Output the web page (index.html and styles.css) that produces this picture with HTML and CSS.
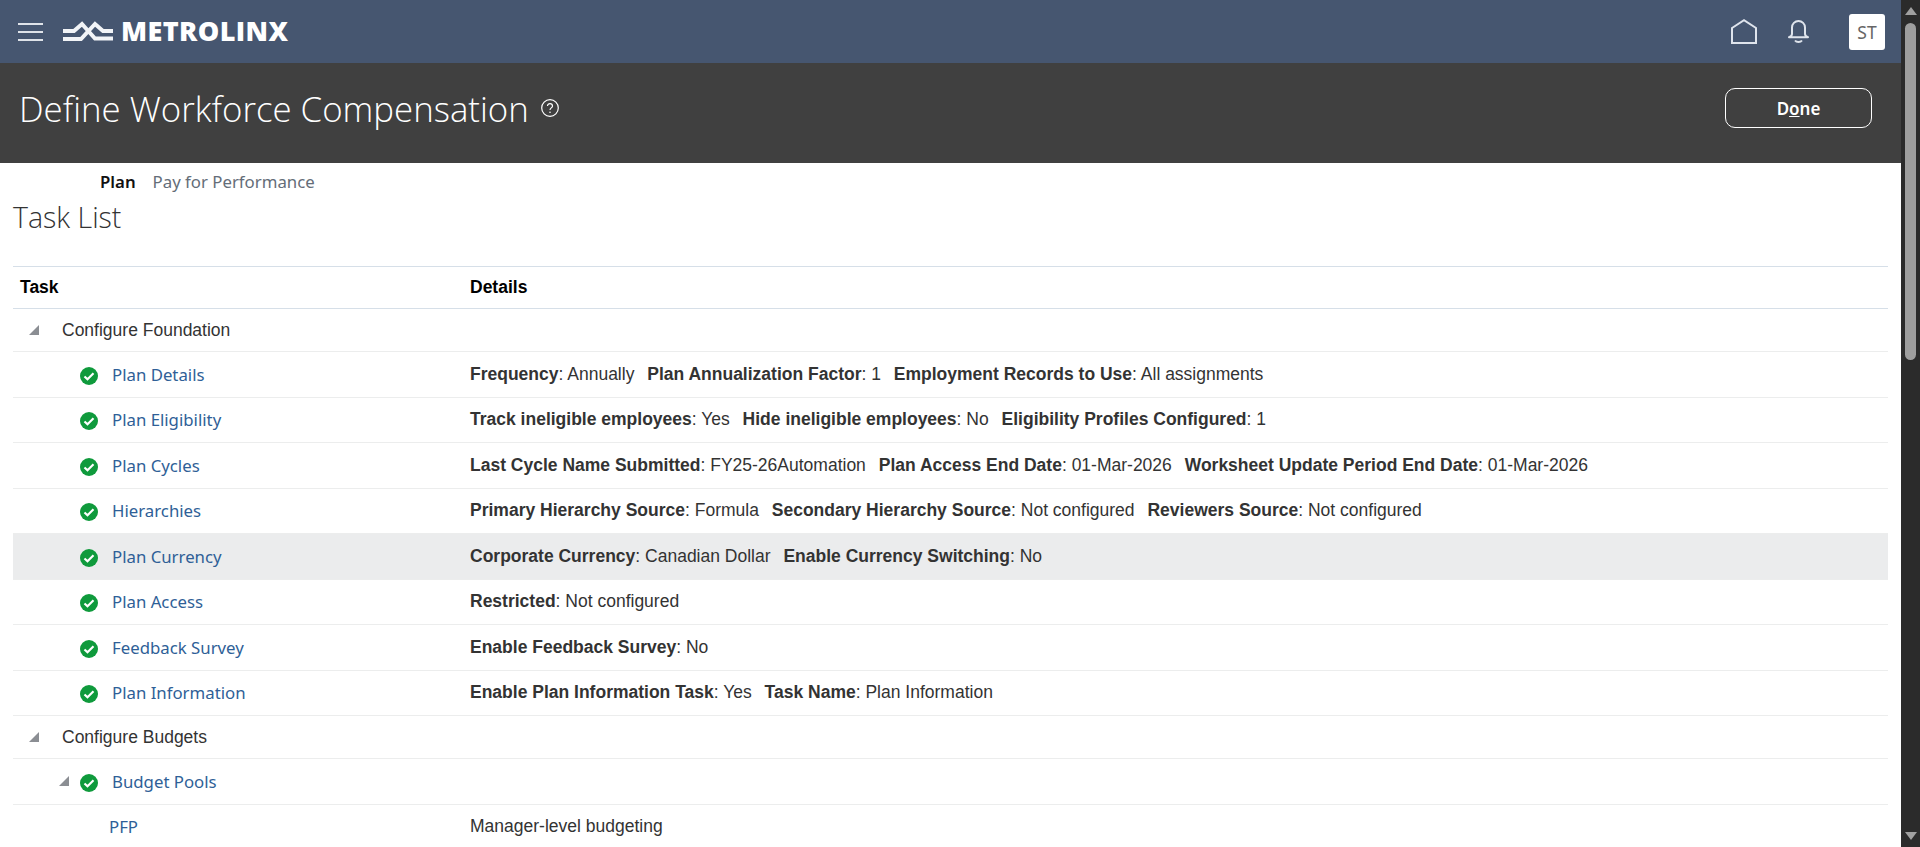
FILE: index.html
```html
<!DOCTYPE html>
<html lang="en">
<head>
<meta charset="UTF-8" />
<title>Define Workforce Compensation</title>
<link rel="stylesheet" href="styles.css">
</head>
<body>

<div class="page">
  <div class="topbar">
    <button class="menu-btn" aria-label="Menu"><span></span><span></span><span></span></button>
    <div class="logo">
      <svg class="logo-mark" width="50" height="22" viewBox="0 0 50 22">
        <path d="M0 10H11L19 3L32 17.500H50" fill="none" stroke="#f2f4f7" stroke-width="4"/>
        <path d="M0 18H18L32 3L40 10H50" fill="none" stroke="#f2f4f7" stroke-width="4"/>
      </svg>
      <span class="logo-text">METROLINX</span>
    </div>
    <div class="topbar-right">
      <svg class="home-icon" width="26" height="25" viewBox="0 0 26 25">
        <path d="M1 9L13 1.200L25 9V24H1z" fill="none" stroke="#dfe4ec" stroke-width="2"/>
      </svg>
      <svg class="bell-icon" width="21" height="25" viewBox="0 0 21 25">
        <path d="M4 15V8.500a6.500 6.500 0 0 1 13 0V15c0 1.500 1 2.500 3 3.200H1c2-.7 3-1.700 3-3.200z" fill="none" stroke="#dfe4ec" stroke-width="2" stroke-linejoin="round"/>
        <path d="M7 21.500c1.500 2 5.500 2 7 0" fill="none" stroke="#dfe4ec" stroke-width="2"/>
      </svg>
      <div class="avatar">ST</div>
    </div>
  </div>

  <div class="titlebar">
    <h1>Define Workforce Compensation</h1>
    <svg class="help-icon" width="20" height="20" viewBox="0 0 20 20">
      <circle cx="10" cy="10" r="8.300" fill="none" stroke="#fff" stroke-width="1.200"/>
      <path d="M7.500 8c0-3.200 5-3.200 5 0 0 1.800-2.500 2-2.500 4" fill="none" stroke="#fff" stroke-width="1.200"/>
      <circle cx="10" cy="14.300" r=".8" fill="#fff"/>
    </svg>
    <button class="done-btn">D<u>o</u>ne</button>
  </div>

  <div class="content">
    <div class="tabs">
      <span class="tab tab-active">Plan</span>
      <span class="tab">Pay for Performance</span>
    </div>
    <h2>Task List</h2>

    <table class="tasks">
      <colgroup><col class="col-task"><col></colgroup>
      <thead>
        <tr><th>Task</th><th>Details</th></tr>
      </thead>
      <tbody>
        <tr class="group">
          <td><div class="cell lvl-1"><i class="tri"></i>Configure Foundation</div></td>
          <td></td>
        </tr>
        <tr>
          <td><div class="cell lvl-2"><svg class="ok"><use href="#ok"/></svg><a href="#">Plan Details</a></div></td>
          <td><b>Frequency</b>: Annually <b>Plan Annualization Factor</b>: 1 <b>Employment Records to Use</b>: All assignments</td>
        </tr>
        <tr>
          <td><div class="cell lvl-2"><svg class="ok"><use href="#ok"/></svg><a href="#">Plan Eligibility</a></div></td>
          <td><b>Track ineligible employees</b>: Yes <b>Hide ineligible employees</b>: No <b>Eligibility Profiles Configured</b>: 1</td>
        </tr>
        <tr>
          <td><div class="cell lvl-2"><svg class="ok"><use href="#ok"/></svg><a href="#">Plan Cycles</a></div></td>
          <td><b>Last Cycle Name Submitted</b>: FY25-26Automation <b>Plan Access End Date</b>: 01-Mar-2026 <b>Worksheet Update Period End Date</b>: 01-Mar-2026</td>
        </tr>
        <tr>
          <td><div class="cell lvl-2"><svg class="ok"><use href="#ok"/></svg><a href="#">Hierarchies</a></div></td>
          <td><b>Primary Hierarchy Source</b>: Formula <b>Secondary Hierarchy Source</b>: Not configured <b>Reviewers Source</b>: Not configured</td>
        </tr>
        <tr class="selected">
          <td><div class="cell lvl-2"><svg class="ok"><use href="#ok"/></svg><a href="#">Plan Currency</a></div></td>
          <td><b>Corporate Currency</b>: Canadian Dollar <b>Enable Currency Switching</b>: No</td>
        </tr>
        <tr>
          <td><div class="cell lvl-2"><svg class="ok"><use href="#ok"/></svg><a href="#">Plan Access</a></div></td>
          <td><b>Restricted</b>: Not configured</td>
        </tr>
        <tr>
          <td><div class="cell lvl-2"><svg class="ok"><use href="#ok"/></svg><a href="#">Feedback Survey</a></div></td>
          <td><b>Enable Feedback Survey</b>: No</td>
        </tr>
        <tr>
          <td><div class="cell lvl-2"><svg class="ok"><use href="#ok"/></svg><a href="#">Plan Information</a></div></td>
          <td><b>Enable Plan Information Task</b>: Yes <b>Task Name</b>: Plan Information</td>
        </tr>
        <tr class="group">
          <td><div class="cell lvl-1"><i class="tri"></i>Configure Budgets</div></td>
          <td></td>
        </tr>
        <tr>
          <td><div class="cell lvl-2 has-tri"><i class="tri"></i><svg class="ok"><use href="#ok"/></svg><a href="#">Budget Pools</a></div></td>
          <td></td>
        </tr>
        <tr>
          <td><div class="cell lvl-3"><a href="#">PFP</a></div></td>
          <td>Manager-level budgeting</td>
        </tr>
      </tbody>
    </table>
  </div>

  <div class="scrollbar">
    <div class="sb-up"></div>
    <div class="sb-track"><div class="sb-thumb"></div></div>
    <div class="sb-down"></div>
  </div>
</div>

<svg width="0" height="0" class="defs">
  <symbol id="ok" viewBox="0 0 18 18">
    <circle cx="9" cy="9" r="9" fill="#0f9a3c"/>
    <path d="M4.500 9.500l3 2.800 6-6" fill="none" stroke="#fff" stroke-width="2.200"/>
  </symbol>
</svg>

</body>
</html>
```

FILE: styles.css
```css
html, body {
  margin: 0;
  height: 100%;
  overflow: hidden;
}
body {
  font-family: "Liberation Sans", Arial, sans-serif;
  font-size: 17.5px;
  color: #333;
  background: #fff;
}
.defs {
  position: absolute;
}
.page {
  position: relative;
  height: 847px;
  padding-right: 19px;
  overflow: hidden;
}

/* top bar */
.topbar {
  display: flex;
  align-items: center;
  height: 63px;
  padding: 0 16px 0 18px;
  background: #465670;
}
.menu-btn {
  display: flex;
  flex-direction: column;
  justify-content: space-between;
  width: 25px;
  height: 18px;
  margin: 0;
  padding: 0;
  background: none;
  border: none;
}
.menu-btn span {
  display: block;
  height: 2px;
  background: #dfe3e9;
}
.logo {
  display: flex;
  align-items: center;
  margin-left: 20px;
}
.logo-text {
  margin-left: 8px;
  margin-bottom: 2px;
  font-family: "Open Sans", sans-serif;
  font-size: 27px;
  font-weight: 800;
  letter-spacing: 0.4px;
  color: #fff;
}
.topbar-right {
  display: flex;
  align-items: center;
  margin-left: auto;
}
.home-icon {
  margin-right: 31px;
}
.bell-icon {
  margin-right: 40px;
}
.avatar {
  width: 36px;
  height: 36px;
  line-height: 36px;
  text-align: center;
  font-family: "Noto Sans", sans-serif;
  font-size: 17.5px;
  color: #666;
  background: #fff;
  border-radius: 3px;
}

/* title bar */
.titlebar {
  display: flex;
  align-items: center;
  height: 90px;
  padding: 0 29px 10px 19px;
  background: #404040;
}
.titlebar h1 {
  margin: 0;
  font-family: "Open Sans", sans-serif;
  font-size: 34.8px;
  font-weight: 300;
  color: #fff;
}
.help-icon {
  margin-left: 11px;
}
.done-btn {
  width: 147px;
  height: 40px;
  margin-left: auto;
  font-family: "Noto Sans", sans-serif;
  font-size: 17px;
  font-weight: 600;
  color: #fff;
  background: none;
  border: 1px solid #fff;
  border-radius: 10px;
}

/* content */
.content {
  padding: 0 13px;
}
.tabs {
  display: flex;
  gap: 17px;
  height: 38px;
  padding: 7px 0 0 87px;
  box-sizing: border-box;
  font-family: "Noto Sans", sans-serif;
  font-size: 16.8px;
  color: #646d78;
}
.tab-active {
  font-weight: 600;
  color: #111;
}
.content h2 {
  height: 65px;
  margin: 0;
  font-family: "Open Sans", sans-serif;
  font-size: 28.5px;
  line-height: 33px;
  font-weight: 300;
  color: #333;
}
.tasks {
  width: 100%;
  border-collapse: collapse;
  table-layout: fixed;
}
.col-task {
  width: 450px;
}
.tasks th {
  height: 41px;
  padding: 0 0 0 7px;
  text-align: left;
  color: #000;
  border-top: 1px solid #d6dfe8;
  border-bottom: 1px solid #d6dfe8;
}
.tasks td {
  height: 44.5px;
  padding: 0 0 0 7px;
  border-bottom: 1px solid #eceded;
  color: #333;
}
.tasks .group td {
  height: 42px;
}
.tasks b {
  margin-left: 8px;
}
.tasks td > b:first-child {
  margin-left: 0;
}
.selected td {
  background: #ebeced;
}
.cell {
  display: flex;
  align-items: center;
}
.lvl-1 {
  padding-left: 42px;
  position: relative;
}
.lvl-1 .tri {
  position: absolute;
  left: 9px;
}
.lvl-2 {
  padding-left: 60px;
  position: relative;
}
.lvl-2 .tri {
  position: absolute;
  left: 39px;
}
.lvl-3 {
  padding-left: 89px;
}
.tri {
  width: 0;
  height: 0;
  border-style: solid;
  border-width: 0 0 10px 10px;
  border-color: transparent transparent #8b8e93 transparent;
}
.ok {
  flex: none;
  width: 18px;
  height: 18px;
  margin-top: 3px;
  margin-right: 14px;
}
.cell a {
  font-family: "Noto Sans", sans-serif;
  font-size: 16.8px;
  color: #2f5f97;
  text-decoration: none;
}

/* scrollbar */
.scrollbar {
  position: absolute;
  top: 0;
  right: 0;
  bottom: 0;
  display: flex;
  flex-direction: column;
  width: 19px;
  background: #2b2b2b;
}
.sb-up, .sb-down {
  height: 23px;
  display: flex;
  justify-content: center;
}
.sb-up::before, .sb-down::before {
  content: "";
  width: 0;
  height: 0;
  margin-top: 7px;
  border-left: 6px solid transparent;
  border-right: 6px solid transparent;
  border-bottom: 8px solid #a0a0a0;
}
.sb-down::before {
  margin-top: 8px;
  border-bottom: none;
  border-top: 8px solid #a0a0a0;
}
.sb-track {
  flex: 1;
  padding: 0 4px;
}
.sb-thumb {
  height: 337px;
  background: #9e9e9e;
  border-radius: 6px;
}
```
